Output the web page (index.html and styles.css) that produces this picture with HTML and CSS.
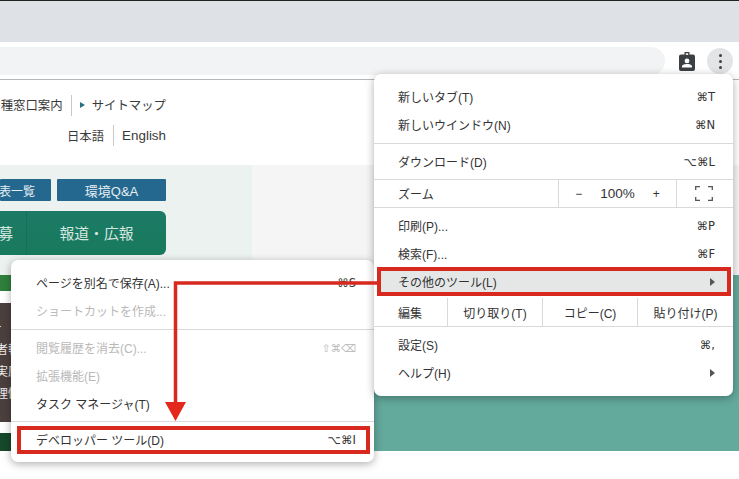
FILE: index.html
```html
<!DOCTYPE html>
<html lang="ja">
<head>
<meta charset="utf-8">
<title>デベロッパーツール</title>
<link rel="stylesheet" href="styles.css">
</head>
<body>
<div class="window">
  <div class="tabstrip"></div>
  <div class="toolbar">
    <div class="omnibox"></div>
    <svg class="badge" width="16" height="19" viewBox="0 0 16 19"><path fill="#3c4043" fill-rule="evenodd" d="M5.5 0h5v2.5h3.5a2 2 0 0 1 2 2V17a2 2 0 0 1-2 2H2a2 2 0 0 1-2-2V4.500a2 2 0 0 1 2-2h3.500zM8 6.500a2.400 2.400 0 1 0 0 4.800a2.400 2.400 0 0 0 0-4.800zM3 15.500h10v-1.300c0-1.500-3-2.300-5-2.300s-5 .8-5 2.300z"/><rect x="6.800" y="1.300" width="2.400" height="1.600" fill="#fff"/></svg>
    <div class="kebab"><i></i><i></i><i></i></div>
  </div>
  <div class="page">
    <header class="site-head">
      <div class="links">
        <span class="clip-left">各種窓口案内</span>
        <span class="divider"></span>
        <span class="tri"></span>
        <span>サイトマップ</span>
      </div>
      <div class="links lang">
        <span>日本語</span>
        <span class="divider short"></span>
        <span class="en">English</span>
      </div>
    </header>
    <section class="pale">
      <div class="pale-left">
        <div class="blue-row">
          <a class="blue first">公表一覧</a>
          <a class="blue second">環境Q&amp;A</a>
        </div>
        <div class="green-nav">
          <span class="nav-a">公募</span>
          <span class="nav-b">報道・広報</span>
        </div>
      </div>
      <div class="pale-right"></div>
    </section>
    <section class="teal">
      <div class="strip">
        <div class="s-green"></div>
        <div class="s-brown">
          <span class="s-tick">ー</span>
          <span>者報</span>
          <span>実原</span>
          <span>理情</span>
        </div>
        <div class="s-dark"></div>
      </div>
    </section>
    <div class="page-foot"></div>
  </div>

  <div class="menu menu-sub">
    <div class="row"><span>ページを別名で保存(A)...</span><span class="key">⌘S</span></div>
    <div class="row off"><span>ショートカットを作成...</span></div>
    <div class="sep"></div>
    <div class="row off"><span>閲覧履歴を消去(C)...</span><span class="key small">⇧⌘⌫</span></div>
    <div class="row off"><span>拡張機能(E)</span></div>
    <div class="row"><span>タスク マネージャ(T)</span></div>
    <div class="sep tight"></div>
    <div class="row hl"><span>デベロッパー ツール(D)</span><span class="key">⌥⌘I</span></div>
  </div>

  <div class="menu menu-main">
    <div class="row"><span>新しいタブ(T)</span><span class="key">⌘T</span></div>
    <div class="row"><span>新しいウインドウ(N)</span><span class="key">⌘N</span></div>
    <div class="sep"></div>
    <div class="row"><span>ダウンロード(D)</span><span class="key">⌥⌘L</span></div>
    <div class="cells zoom">
      <span class="cell c-label">ズーム</span>
      <span class="cell c-zoom"><span>−</span><span class="pct">100%</span><span>+</span></span>
      <span class="cell c-full"><svg width="18" height="15" viewBox="0 0 18 15"><path fill="none" stroke="#555" stroke-width="1.300" d="M.7 4V.7H5M13 .7h4.300V4M.7 11v3.300H5M13 14.300h4.300V11"/></svg></span>
    </div>
    <div class="row after"><span>印刷(P)...</span><span class="key">⌘P</span></div>
    <div class="row"><span>検索(F)...</span><span class="key">⌘F</span></div>
    <div class="row hl gray"><span>その他のツール(L)</span><span class="arrow-r"></span></div>
    <div class="cells edit">
      <span class="cell e-label">編集</span>
      <span class="cell e-item">切り取り(T)</span>
      <span class="cell e-item">コピー(C)</span>
      <span class="cell e-item last">貼り付け(P)</span>
    </div>
    <div class="row after"><span>設定(S)</span><span class="key">⌘,</span></div>
    <div class="row"><span>ヘルプ(H)</span><span class="arrow-r"></span></div>
  </div>

  <svg class="callout" width="739" height="479" viewBox="0 0 739 479">
    <path fill="none" stroke="#d8291f" stroke-width="3.500" d="M378 283H175.500V404"/>
    <path fill="#e5281c" d="M165 402h21l-10.500 19z"/>
  </svg>
</div>
</body>
</html>
```
FILE: styles.css
```css
* { box-sizing: border-box; }
html, body { margin: 0; height: 100%; }
body {
  font-family: "Liberation Sans", "Noto Sans CJK JP", sans-serif;
  font-size: 12px;
  color: #333;
  overflow: hidden;
  background: #fff;
}
.window {
  position: relative;
  width: 739px;
  height: 479px;
  display: flex;
  flex-direction: column;
  overflow: hidden;
}
.tabstrip {
  height: 42px;
  flex: none;
  background: #dee1e6;
  border-top: 1px solid #222;
}
.toolbar {
  height: 38px;
  flex: none;
  display: flex;
  align-items: flex-start;
  background: #fff;
  padding: 5px 7px 0 0;
  border-bottom: 1px solid #b4b6b8;
}
.omnibox {
  width: 665px;
  height: 28px;
  background: #f1f3f4;
  border-radius: 0 14px 14px 0;
  flex: none;
}
.badge { margin: 5px 0 0 14px; flex: none; }
.kebab {
  width: 26px;
  height: 26px;
  margin: 1px 0 0 12px;
  border-radius: 50%;
  background: #e3e4e6;
  display: flex;
  flex-direction: column;
  align-items: center;
  justify-content: center;
  gap: 3px;
  flex: none;
}
.kebab i {
  width: 3px;
  height: 3px;
  border-radius: 50%;
  background: #3c4043;
}
.page { flex: 1; display: flex; flex-direction: column; min-height: 0; }
.site-head {
  height: 85px;
  flex: none;
  padding-top: 14px;
  width: 166px;
  display: flex;
  flex-direction: column;
  gap: 9px;
}
.links {
  height: 22px;
  display: flex;
  align-items: center;
  justify-content: flex-end;
  font-size: 12.400px;
  white-space: nowrap;
  color: #3a3a3a;
}
.clip-left { flex: none; }
.en { font-size: 13.400px; }
.lang { padding-bottom: 1px; }
.divider {
  width: 1px;
  height: 21px;
  background: #c9c9c9;
  margin: 0 8px;
  flex: none;
}
.short { margin: 0 8.500px; }
.tri {
  width: 0;
  height: 0;
  border-left: 5px solid #2a6f7f;
  border-top: 3px solid transparent;
  border-bottom: 3px solid transparent;
  margin-right: 7px;
  flex: none;
}
.pale {
  height: 110px;
  flex: none;
  display: flex;
}
.pale-left {
  width: 252px;
  background: #ecf2f0;
  padding-top: 14px;
  flex: none;
}
.pale-right { flex: 1; background: #f4f5f4; }
.blue-row {
  width: 166px;
  height: 22px;
  display: flex;
  justify-content: flex-end;
  gap: 6px;
  overflow: hidden;
}
.blue {
  background: #24688f;
  color: #e6eef3;
  font-size: 12px;
  height: 22px;
  display: flex;
  align-items: center;
  justify-content: center;
  border-radius: 1px;
  flex: none;
  white-space: nowrap;
}
.first { width: 51px; justify-content: flex-end; padding-right: 16px; }
.second { width: 109px; font-size: 13px; }
.green-nav {
  width: 166px;
  height: 44px;
  margin-top: 10px;
  background: linear-gradient(#1c7a66, #187a5c);
  border-radius: 0 6px 6px 0;
  color: #d6e6e0;
  font-size: 14.800px;
  display: flex;
  align-items: center;
  overflow: hidden;
}
.nav-a {
  width: 27px;
  height: 100%;
  flex: none;
  display: flex;
  align-items: center;
  justify-content: flex-end;
  padding: 0 13px 2px 0;
  border-right: 1px solid #1a6d58;
  white-space: nowrap;
}
.nav-b { flex: 1; text-align: center; padding-bottom: 2px; }
.teal {
  height: 176px;
  flex: none;
  background: #63a99c;
}
.strip {
  width: 20px;
  height: 100%;
  background: #fff;
  display: flex;
  flex-direction: column;
  justify-content: space-between;
}
.s-green { height: 16px; background: #2f7f3c; }
.s-brown {
  height: 119px;
  background: #4b403e;
  color: #eee;
  font-size: 12px;
  display: flex;
  flex-direction: column;
  align-items: flex-end;
  overflow: hidden;
  padding: 14px 0 0 0;
  line-height: 22px;
  white-space: nowrap;
}
.s-tick { padding-right: 18px; }
.s-dark { height: 18px; background: #17492c; }
.page-foot { flex: 1; background: #fff; }

.menu {
  position: absolute;
  background: #fff;
  border-radius: 7px;
  box-shadow: 0 2px 9px rgba(0, 0, 0, .32);
  white-space: nowrap;
}
.menu-main { left: 374px; top: 74px; width: 359px; height: 322px; padding-top: 9px; }
.menu-sub { left: 11px; top: 260px; width: 363px; height: 202px; padding-top: 9px; }
.row {
  height: 28px;
  display: flex;
  align-items: center;
  justify-content: space-between;
  padding: 0 18px 1px 24px;
}
.key { font-family: "DejaVu Sans", "Noto Sans CJK JP", sans-serif; font-size: 11.500px; color: #333; }
.key.small { font-size: 10.500px; }
.off, .off .key { color: #b9b9b9; }
.sep { height: 1px; background: #d9d9d9; margin: 4px 0; }
.sep.tight { margin: 3px 0 4px; }
.hl { border: 4px solid #d8291f; }
.menu-sub .row { padding-left: 25px; }
.menu-sub .hl { margin: 0 4px 0 6px; padding: 0 10px 1px 15px; }
.menu-main .hl {
  margin: -1px 2px 0 3px;
  height: 29px;
  padding: 0 12px 0 17px;
}
.gray { background: #e5e7e7; }
.arrow-r {
  width: 0;
  height: 0;
  border-left: 5px solid #555;
  border-top: 4px solid transparent;
  border-bottom: 4px solid transparent;
}
.cells {
  display: flex;
  height: 29px;
  align-items: stretch;
  border-top: 1px solid #d9d9d9;
  border-bottom: 1px solid #d9d9d9;
}
.zoom { margin-top: 3px; }
.edit { margin-top: 2px; border-top: 0; }
.cell { display: flex; align-items: center; justify-content: center; flex: none; }
.c-label { width: 185px; justify-content: flex-start; padding-left: 24px; border-right: 1px solid #d9d9d9; }
.c-zoom { width: 118px; border-right: 1px solid #d9d9d9; gap: 18px; }
.c-full { flex: 1; padding-right: 3px; }
.pct { font-size: 13.500px; }
.e-label { width: 74px; justify-content: flex-start; padding-left: 24px; border-right: 1px solid #d9d9d9; }
.e-item { width: 95px; border-right: 1px solid #d9d9d9; }
.e-item.last { border-right: 0; }
.after { margin-top: 4px; }
.callout { position: absolute; left: 0; top: 0; pointer-events: none; }
```
